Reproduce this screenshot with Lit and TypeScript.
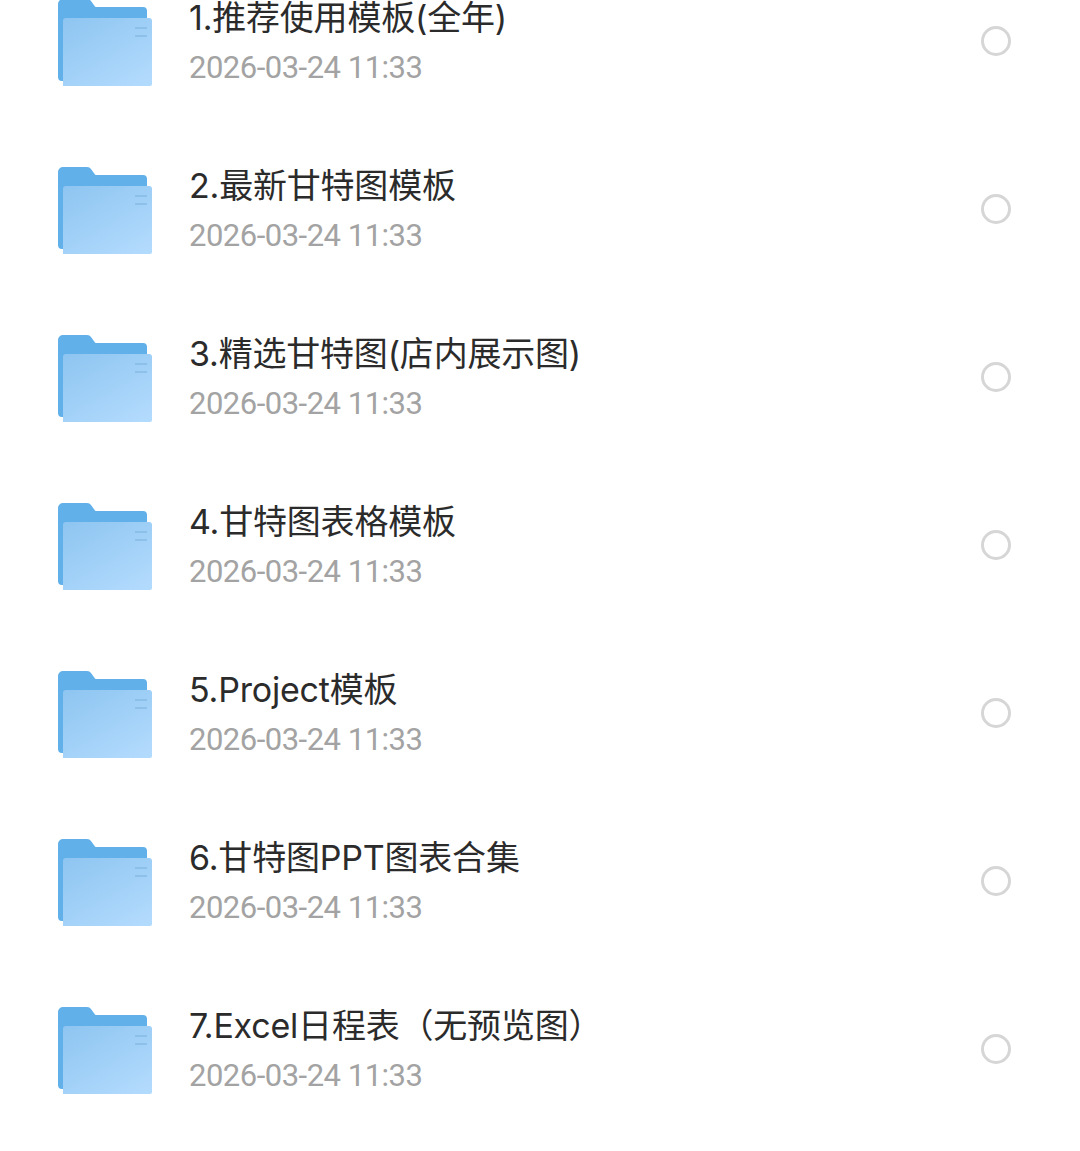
import {LitElement, html, css, svg} from 'lit';
import {customElement} from 'lit/decorators.js';

const folderIcon = svg`
  <svg class="folder" viewBox="0 0 96 88" width="96" height="88">
    <defs>
      <linearGradient id="front" x1="0.1" y1="0" x2="0.85" y2="1">
        <stop offset="0" stop-color="#8fc6f1" />
        <stop offset="1" stop-color="#b2dafd" />
      </linearGradient>
    </defs>
    <path
      d="M1 6a5 5 0 0 1 5-5h24c2 0 3 .7 4 2l4 5.500a2 2 0 0 0 1.600.5H86a4 4 0 0 1 4 4v70H5a4 4 0 0 1-4-4z"
      fill="#62b0ea"
    />
    <path
      d="M6 23a3 3 0 0 1 3-3h83a3 3 0 0 1 3 3v63a2 2 0 0 1-2 2H6z"
      fill="url(#front)"
    />
    <rect x="78" y="29" width="12" height="2" fill="#7fb5e0" opacity=".6" />
    <rect x="78" y="37" width="12" height="2" fill="#7fb5e0" opacity=".6" />
  </svg>
`;

const files = [
  '1.推荐使用模板(全年)',
  '2.最新甘特图模板',
  '3.精选甘特图(店内展示图)',
  '4.甘特图表格模板',
  '5.Project模板',
  '6.甘特图PPT图表合集',
  '7.Excel日程表（无预览图）',
];

@customElement('app-root')
class AppRoot extends LitElement {
  static override styles = css`
    :host {
      display: block;
      height: 1151px;
      overflow: hidden;
      background: #fff;
      font-family: 'Inter', 'Noto Sans CJK SC', sans-serif;
    }

    .list {
      margin-top: -43px;
      padding: 0 69px 0 57px;
    }

    .row {
      display: flex;
      align-items: center;
      height: 168px;
    }

    .folder {
      flex: none;
      margin-right: 36px;
      margin-top: 2px;
    }

    .row__text {
      flex: 1;
      display: flex;
      flex-direction: column;
      gap: 8px;
      margin-top: 2px;
    }

    .row__title {
      font-size: 34px;
      line-height: 41px;
      margin-bottom: 2px;
      letter-spacing: -0.2px;
      color: #2b2b2b;
      white-space: nowrap;
    }

    .row__date {
      font-family: 'Roboto', sans-serif;
      font-size: 31px;
      line-height: 40px;
      letter-spacing: -0.5px;
      color: #a3a3a3;
      white-space: nowrap;
    }

    .radio {
      flex: none;
      box-sizing: border-box;
      width: 30px;
      height: 30px;
      border: 3px solid #d6d6d6;
      border-radius: 50%;
    }
  `;

  override render() {
    return html`
      <div class="list">
        ${files.map(
          (name) => html`
            <div class="row">
              ${folderIcon}
              <div class="row__text">
                <span class="row__title">${name}</span>
                <span class="row__date">2026-03-24 11:33</span>
              </div>
              <span class="radio"></span>
            </div>
          `
        )}
      </div>
    `;
  }
}

declare global {
  interface HTMLElementTagNameMap {
    'app-root': AppRoot;
  }
}
